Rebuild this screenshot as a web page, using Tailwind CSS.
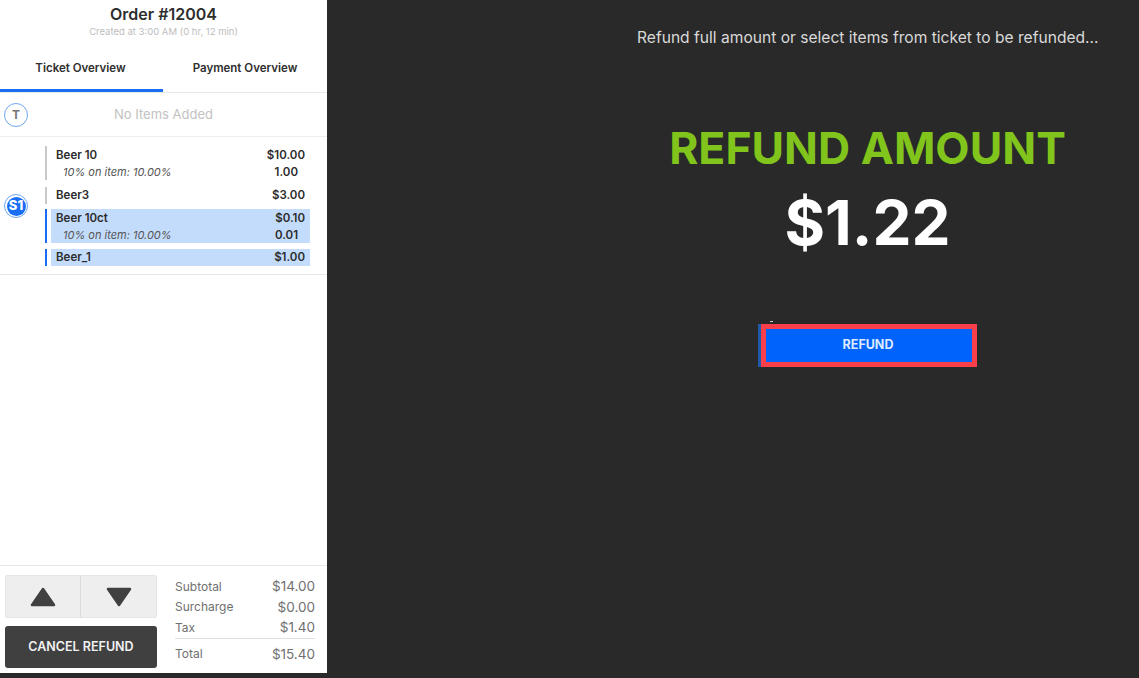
<!DOCTYPE html>
<html>
<head>
<meta charset="utf-8">
<script src="https://cdn.jsdelivr.net/npm/@tailwindcss/browser@4"></script>
</head>
<body class="m-0 overflow-hidden bg-[#292929]">
<div class="flex h-[678px] w-[1139px] font-['Inter','Liberation_Sans',sans-serif] text-[#2b2b2b]">
  <aside class="flex h-[673px] w-[327px] shrink-0 flex-col bg-white">
    <header class="flex h-[44px] flex-col items-center pt-[5px]">
      <h1 class="text-[16px] leading-[19px] font-semibold text-[#2e2e2e]">Order #12004</h1>
      <p class="mt-[1px] text-[9.5px] leading-[13px] text-[#bdbdbd]">Created at 3:00 AM (0 hr, 12 min)</p>
    </header>
    <nav class="flex h-[49px] border-b border-[#e8e8e8] text-[11.5px] font-semibold text-[#2e2e2e]">
      <div class="flex h-[48px] w-[163px] items-center justify-center border-b-[3px] border-[#1a6ef5] pt-[4px] pr-[2px]">Ticket Overview</div>
      <div class="flex h-[48px] flex-1 items-center justify-center pt-[2px]">Payment Overview</div>
    </nav>
    <div class="flex h-[44px] items-center border-b border-[#eeeeee]">
      <span class="ml-[4px] flex h-[24px] w-[24px] items-center justify-center rounded-full border-[1.5px] border-[#6fa5ef] text-[12px] font-bold text-[#777777]">T</span>
      <span class="flex-1 pr-[28px] text-center text-[13px] text-[#c2c2c2]">No Items Added</span>
    </div>
    <section class="relative flex h-[138px] flex-col border-b border-[#e8e8e8] pt-[9px] text-[11.5px] font-semibold">
      <span class="absolute top-[57px] left-[4px] flex h-[24px] w-[24px] items-center justify-center rounded-full border-[1.5px] border-[#6fa5ef] text-[13px] font-extrabold text-white"><span class="flex h-[19px] w-[19px] items-center justify-center rounded-full bg-[#1a6ef5]">S1</span></span>
      <div class="mb-[7px] ml-[45px] flex h-[34px]">
        <i class="w-[2px] bg-[#c9c9c9]"></i>
        <div class="ml-[4px] w-[259px] px-[5px] pt-[1px] leading-[17px]">
          <div class="flex justify-between"><span>Beer 10</span><span>$10.00</span></div>
          <div class="flex items-center justify-between pr-[7px] pl-[7px]"><em class="text-[11px] font-normal text-[#555555]">10% on item: 10.00%</em><span>1.00</span></div>
        </div>
      </div>
      <div class="mb-[5px] ml-[45px] flex h-[17px]">
        <i class="w-[2px] bg-[#c9c9c9]"></i>
        <div class="ml-[4px] flex w-[259px] justify-between px-[5px] leading-[17px]"><span>Beer3</span><span>$3.00</span></div>
      </div>
      <div class="mb-[6px] ml-[45px] flex h-[34px]">
        <i class="w-[2px] bg-[#1a6ef5]"></i>
        <div class="ml-[4px] w-[259px] bg-[#c4dcfb] px-[5px] pt-[1px] leading-[17px]">
          <div class="flex justify-between"><span>Beer 10ct</span><span>$0.10</span></div>
          <div class="flex items-center justify-between pr-[7px] pl-[7px]"><em class="text-[11px] font-normal text-[#555555]">10% on item: 10.00%</em><span>0.01</span></div>
        </div>
      </div>
      <div class="ml-[45px] flex h-[17px]">
        <i class="w-[2px] bg-[#1a6ef5]"></i>
        <div class="ml-[4px] flex w-[259px] justify-between bg-[#c4dcfb] px-[5px] leading-[17px]"><span>Beer_1</span><span>$1.00</span></div>
      </div>
    </section>
    <div class="flex-1"></div>
    <footer class="flex h-[108px] border-t border-[#e8e8e8] pt-[9px] pl-[5px]">
      <div class="w-[152px]">
        <div class="flex h-[43px] rounded-[2px] border border-[#e6e6e6] bg-[#eeeeee]">
          <button class="flex w-[75px] items-center justify-center border-r border-[#dcdcdc]">
            <svg width="26" height="20" viewBox="0 0 26 20"><path d="M13 2 L24 18 H2 Z" fill="#404040" stroke="#404040" stroke-width="2.5" stroke-linejoin="round"/></svg>
          </button>
          <button class="flex flex-1 items-center justify-center">
            <svg width="26" height="20" viewBox="0 0 26 20"><path d="M13 18 L24 2 H2 Z" fill="#404040" stroke="#404040" stroke-width="2.5" stroke-linejoin="round"/></svg>
          </button>
        </div>
        <button class="mt-[8px] flex h-[42px] w-full items-center justify-center rounded-[3px] bg-[#404040] text-[12.5px] font-semibold text-[#f2f2f2]">CANCEL REFUND</button>
      </div>
      <dl class="ml-[18px] w-[140px] pt-[1px] text-[#707070]">
        <div class="flex h-[21px] items-center justify-between"><dt class="text-[12px]">Subtotal</dt><dd class="text-[13.5px]">$14.00</dd></div>
        <div class="flex h-[20px] items-center justify-between"><dt class="text-[12px]">Surcharge</dt><dd class="text-[13.5px]">$0.00</dd></div>
        <div class="flex h-[22px] items-center justify-between border-b border-[#e0e0e0]"><dt class="text-[12px]">Tax</dt><dd class="text-[13.5px]">$1.40</dd></div>
        <div class="flex h-[30px] items-center justify-between"><dt class="text-[12px]">Total</dt><dd class="text-[13.5px]">$15.40</dd></div>
      </dl>
    </footer>
  </aside>
  <main class="flex flex-1 flex-col items-center pl-[269px]">
    <p class="mt-[27px] w-full whitespace-nowrap pl-[41px] text-[15.6px] leading-[21px] text-[#d9d9d9]">Refund full amount or select items from ticket to be refunded...</p>
    <h2 class="mt-[73px] text-[44.5px] leading-[54px] font-bold whitespace-nowrap text-[#80c41c]">REFUND AMOUNT</h2>
    <div class="mt-[12px] text-[62px] leading-[72px] font-bold text-white">$1.22</div>
    <button class="relative mt-[65px] ml-[3px] h-[43px] w-[216px] border-[5px] border-[#f9404a] bg-[#0063fb] pr-[2px] text-[12.5px] font-bold text-[#dbeaff] shadow-[-3px_0_0_#1f5aa8]">REFUND<span class="absolute top-[-8px] left-[4px] h-[1px] w-[3px] bg-[#d0d0d0]"></span></button>
  </main>
</div>
</body>
</html>
